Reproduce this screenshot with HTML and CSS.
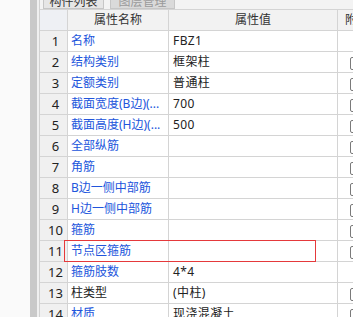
FILE: index.html
```html
<!DOCTYPE html>
<html lang="zh-CN">
<head>
<meta charset="utf-8">
<title>属性列表</title>
<link rel="stylesheet" href="styles.css">
</head>
<body>
<div class="app">
  <div class="side"></div>
  <div class="gutter"></div>
  <div class="spacer"></div>
  <div class="panel">
    <div class="tabs">
      <div class="tab tab-active">构件列表</div>
      <div class="tab tab-other">图层管理</div>
    </div>
    <div class="grid">
      <div class="row head">
        <div class="cell num"></div>
        <div class="cell name-h">属性名称</div>
        <div class="cell val-h">属性值</div>
        <div class="cell extra-h">附</div>
      </div>
      <div class="row"><div class="cell num">1</div><div class="cell name">名称</div><div class="cell val">FBZ1</div><div class="cell extra"></div></div>
      <div class="row"><div class="cell num">2</div><div class="cell name">结构类别</div><div class="cell val">框架柱</div><div class="cell extra"><span class="cb"></span></div></div>
      <div class="row"><div class="cell num">3</div><div class="cell name">定额类别</div><div class="cell val">普通柱</div><div class="cell extra"><span class="cb"></span></div></div>
      <div class="row"><div class="cell num">4</div><div class="cell name">截面宽度(B边)(...</div><div class="cell val">700</div><div class="cell extra"><span class="cb"></span></div></div>
      <div class="row"><div class="cell num">5</div><div class="cell name">截面高度(H边)(...</div><div class="cell val">500</div><div class="cell extra"><span class="cb"></span></div></div>
      <div class="row"><div class="cell num">6</div><div class="cell name">全部纵筋</div><div class="cell val"></div><div class="cell extra"><span class="cb"></span></div></div>
      <div class="row"><div class="cell num">7</div><div class="cell name">角筋</div><div class="cell val"></div><div class="cell extra"><span class="cb"></span></div></div>
      <div class="row"><div class="cell num">8</div><div class="cell name">B边一侧中部筋</div><div class="cell val"></div><div class="cell extra"><span class="cb"></span></div></div>
      <div class="row"><div class="cell num">9</div><div class="cell name">H边一侧中部筋</div><div class="cell val"></div><div class="cell extra"><span class="cb"></span></div></div>
      <div class="row"><div class="cell num">10</div><div class="cell name">箍筋</div><div class="cell val"></div><div class="cell extra"><span class="cb"></span></div></div>
      <div class="row"><div class="cell num">11</div><div class="cell name">节点区箍筋</div><div class="cell val"></div><div class="cell extra"><span class="cb"></span></div></div>
      <div class="row"><div class="cell num">12</div><div class="cell name">箍筋肢数</div><div class="cell val">4*4</div><div class="cell extra"></div></div>
      <div class="row"><div class="cell num">13</div><div class="cell name plain">柱类型</div><div class="cell val">(中柱)</div><div class="cell extra"><span class="cb"></span></div></div>
      <div class="row"><div class="cell num">14</div><div class="cell name">材质</div><div class="cell val">现浇混凝土</div><div class="cell extra"><span class="cb"></span></div></div>
    </div>
    <div class="highlight"></div>
  </div>
</div>
</body>
</html>
```

FILE: styles.css
```css
* { box-sizing: border-box; }
html, body { margin: 0; padding: 0; }
body {
  background: #fafafa;
  font-family: "Noto Sans", "Noto Sans CJK SC", sans-serif;
  font-size: 12px;
  color: #222;
  overflow: hidden;
  width: 353px;
  height: 317px;
}
.app {
  display: flex;
  height: 317px;
}
.side { width: 30px; background: #fafafa; flex: none; }
.gutter { width: 7px; background: #c9c9c9; flex: none; }
.spacer { width: 2px; background: #f0f0f0; flex: none; }
.panel {
  position: relative;
  flex: 1;
  background: #fff;
  border-left: 1px solid #d2d2d2;
  overflow: hidden;
}
.tabs {
  display: flex;
  height: 9px;
  overflow: hidden;
  background: #f3f3f3;
  padding-left: 3px;
  gap: 6px;
}
.tab {
  flex: none;
  height: 17px;
  margin-top: -8px;
  line-height: 18px;
  text-align: center;
  border: 1px solid #c6c6c6;
  font-size: 12px;
}
.tab-active { width: 61px; background: #e6e6e6; color: #333; }
.tab-other { width: 65px; background: #dadada; color: #9a9a9a; }
.grid {
  border-top: 1px solid #d4d4d4;
}
.row {
  display: grid;
  grid-template-columns: 28px 101px 169px 40px;
  height: 21px;
}
.cell {
  border-right: 1px solid #d4d4d4;
  border-bottom: 1px solid #d4d4d4;
  line-height: 20px;
  white-space: nowrap;
  overflow: hidden;
}
.num {
  background: #f0f0f0;
  text-align: center;
  padding-left: 4px;
  font-size: 13px;
  color: #222;
}
.head .cell { background: #f2f2f2; color: #333; font-size: 12px; }
.head .num { background: #eef0f4; }
.name-h, .val-h { text-align: center; }
.extra-h { padding-left: 7px; border-right: none; }
.name { padding-left: 3px; color: #2155dc; }
.name.plain { color: #222; }
.val { padding-left: 4px; color: #222; letter-spacing: 0.4px; }
.extra { border-right: none; padding-left: 12px; padding-top: 5px; }
.cb {
  display: block;
  width: 12px;
  height: 13px;
  border: 1px solid #7a7a7a;
  border-radius: 2px;
  background: #fff;
}
.highlight {
  position: absolute;
  left: 24px;
  top: 240px;
  width: 252px;
  height: 22px;
  border: 1px solid #e5393b;
}
```
